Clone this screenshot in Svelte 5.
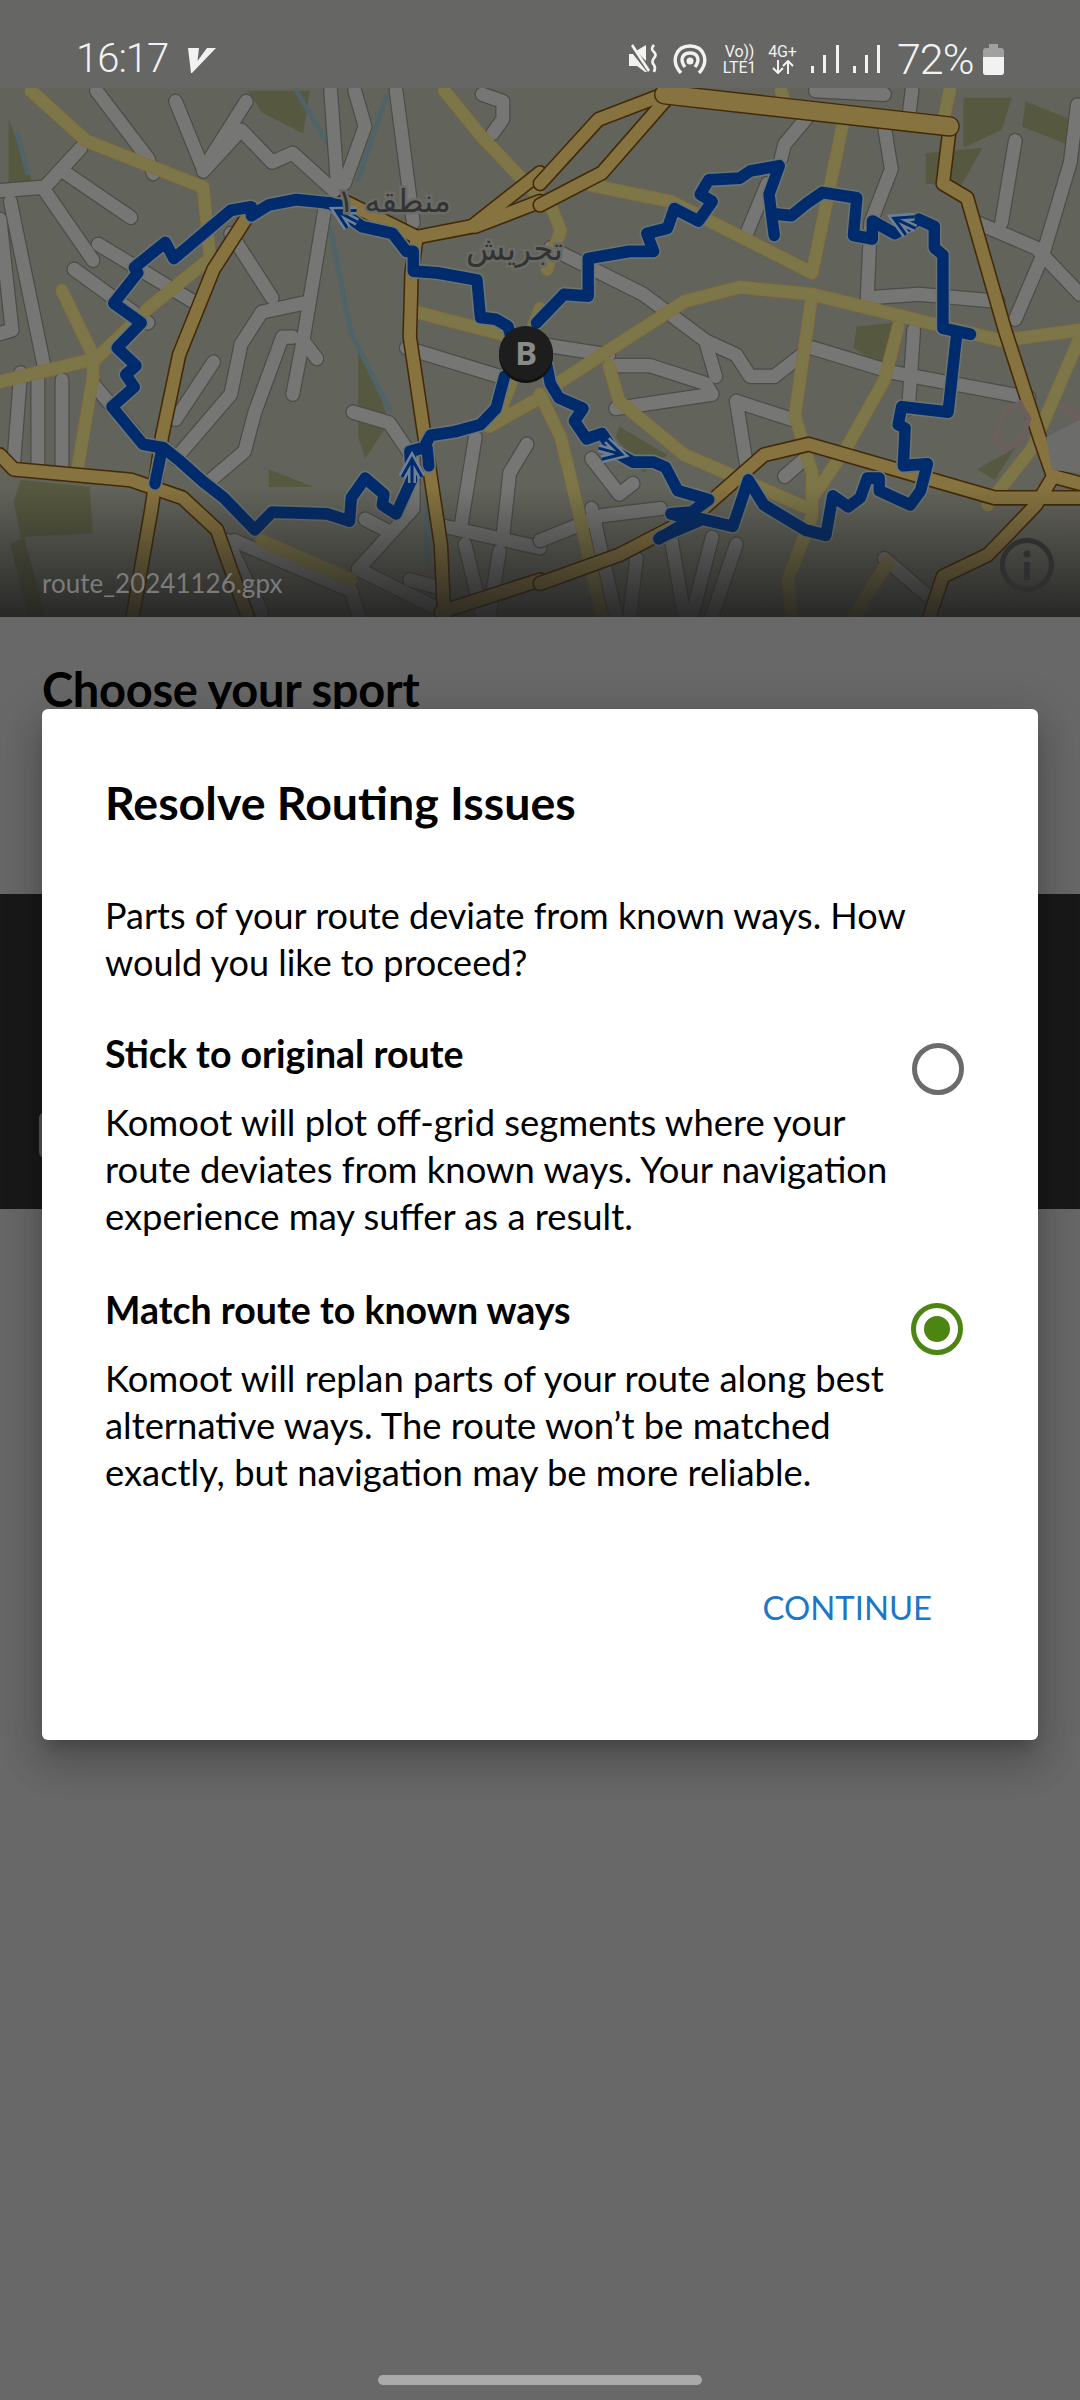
<script>
  // map traced in 1568px crop space, grouped per half of the screen
  const left = {
    minor: [
      "M510 60L590 250L715 60", "M590 255L700 140L790 230L850 205L970 310", "M280 30L335 100L430 220L445 262",
      "M0 310L130 300L235 190", "M190 260L380 385", "M130 310L270 505", "M285 460L560 620", "M215 530L430 680",
      "M30 340L130 810", "M0 390L35 700L0 710", "M670 430L790 610", "M960 30L980 300", "M1030 30L1060 130L1000 290",
      "M1150 30L1200 400", "M945 350L880 730L850 880", "M880 625L760 650L700 740L670 880L510 1060",
      "M850 720L820 720L740 930L710 1040L600 1130", "M620 790L510 950", "M880 730L920 780",
      "M60 820L40 1070", "M110 840L110 1075", "M180 840L180 1085", "M1025 930L1130 960L1200 1060L1200 1200L1040 1370",
      "M1180 750L1450 830", "M270 850L400 1000", "M1380 1000L1340 1240", "M1530 1020L1480 1100L1460 1280",
      "M1290 1250L1568 1310", "M680 1290L1020 1430L1040 1500", "M1040 1370L1270 1480", "M1060 1230L1120 1260",
      "M1190 1400L1270 1420", "M1400 40L1460 60L1460 110L1430 150", "M660 1290L760 1490", "M1350 1300L1400 1500", "M1450 1320L1420 1500"
    ],
    yellow: [
      "M90 30L250 170L590 300L610 500L430 640L280 780L0 845", "M180 590L270 770L270 830L225 1090",
      "M1290 30L1400 160L1568 330", "M1210 650L1470 715", "M1420 970L1568 890", "M760 1290L1020 1400", "M1568 640L1480 860L1440 960"
    ],
    major: [
      "M720 380L620 530L520 770L470 1000L440 1200L385 1505", "M0 1050L40 1090L380 1120L530 1170L630 1260L720 1505",
      "M1000 340L1210 440L1370 410L1568 260", "M1210 440L1195 540L1190 720L1230 980L1280 1300L1290 1505",
      "M1280 1490L1568 1400", "M1380 410L1568 340"
    ],
    wide: [],
    green: [
      "M720 30L900 30L880 150L760 90Z", "M1040 760L1110 900L1130 960L1060 1060L1040 1000Z", "M780 1090L910 1140L780 1140Z",
      "M60 1120L260 1140L270 1270L60 1280L40 1180Z", "M25 110L60 200L100 300L25 300Z", "M30 1300L80 1500L130 1500L70 1280Z"
    ],
    water: ["M860 30L960 190L970 300", "M960 420L1020 710L1130 920", "M1120 50L1040 280", "M1240 1170L1240 1350", "M50 150L80 260"],
    route: [
      "M1490 740L1475 690L1440 670L1395 665L1385 560L1270 540L1200 535L1200 480L1180 480L1140 430L1050 410L1000 375L960 345L860 335L780 350L730 380L730 355L670 365L505 500L480 455L390 525L400 540L330 625L410 680L340 750L395 800L365 825L390 860L325 915L415 1020L475 1030L520 1065L590 1125L650 1170L680 1200L740 1260L790 1210L950 1215L1015 1235L1020 1170L1060 1115L1115 1160L1110 1190L1150 1215L1195 1120L1190 1040L1230 1030L1250 995L1320 985L1395 965L1440 920L1465 830",
      "M470 1035L450 1130", "M1240 1030L1245 1080", "M950 345L985 350"
    ]
  };
  const right = {
    minor: [
      "M30 470L300 600L480 730L570 770L610 830L680 830L760 770", "M790 750L1030 820L1420 890", "M0 740L200 770",
      "M220 800L320 800L480 850L500 880L220 920", "M1085 700L1070 920", "M570 900L730 950", "M570 900L600 1080",
      "M700 220L710 180L780 100", "M600 430L660 290", "M1000 130L1020 250L960 400L950 610L1100 600L1330 620",
      "M1270 400L1440 470L1568 600", "M1380 670L1460 490L1540 230L1560 70", "M1340 400L1380 170", "M1000 1340L1120 1440",
      "M380 1280L420 1505", "M500 1280L440 1505", "M280 1340L260 1505", "M150 1200L220 1500", "M0 1290L180 1220L350 1200",
      "M570 1300L500 1500", "M150 1060L230 1160L270 1130", "M710 1110L770 1060", "M480 730L510 830", "M800 30L1000 40", "M1080 30L1070 110"
    ],
    yellow: [
      "M150 295L380 340L790 540L880 120", "M50 850L420 620L580 580L790 600L1340 730L1568 700",
      "M790 600L740 940L790 1100L790 1220L720 1400L730 1505", "M200 800L230 900L420 1050L780 1200",
      "M1040 690L1000 840L890 1030L790 1170", "M30 350L60 420L20 530", "M0 880L60 1000L110 1200L180 1505",
      "M1010 1350L910 1505", "M1190 30L1170 120", "M1300 1190L1430 1030L1568 720", "M700 30L710 60"
    ],
    major: [
      "M1190 130L1170 290L1240 330L1350 700L1450 1000L1490 1110L1440 1190L1300 1330L1170 1390L1130 1505",
      "M1490 1110L1568 1130", "M0 1410L230 1330L450 1220L650 1050L780 1020L1320 1170L1568 1170",
      "M0 290L170 110L360 40", "M0 350L180 260L370 50"
    ],
    wide: ["M360 40L1190 130"],
    green: [
      "M1230 50L1370 50L1340 140L1230 190Z", "M1410 60L1540 110L1530 180L1400 130Z", "M1120 205L1285 190L1220 300L1120 290Z",
      "M920 690L1030 680L990 800L910 750Z", "M230 970L370 1050L300 1100L220 1000Z", "M1270 1090L1380 1030L1320 1120Z"
    ],
    water: [],
    route: [
      "M-10 680L70 600L140 605L140 500L260 480L330 480L310 430L370 415L390 360L460 395L500 340L465 320L490 280L580 275L610 255L695 240L665 320L680 435",
      "M680 375L730 380L775 345L820 315L920 330L910 435L965 445L965 395L1030 430L1100 390L1145 410L1145 470L1170 490L1170 695L1250 712",
      "M1210 710L1185 930L1050 915L1040 965L1060 975L1055 1080L1125 1075L1105 1150L1075 1190L985 1150L985 1115L950 1115L930 1170L895 1195L850 1165L830 1275L770 1260L650 1190L605 1120L560 1250L450 1225L345 1285",
      "M350 1280L460 1235L380 1215L440 1210L490 1175L400 1150L365 1085L330 1070L270 1070L215 1040L180 990L135 1005L100 955L125 920L55 890L30 850L20 800"
    ]
  };
  const halves = [
    { data: left, move: "translate(0 80) scale(.3444 .3571)" },
    { data: right, move: "translate(540 80) scale(.3444 .3571)" }
  ];
  // x, y, heading of the little direction arrows on the route
  const arrows = [
    { x: 344, y: 215, a: -62 },
    { x: 412, y: 468, a: 0 },
    { x: 613, y: 452, a: 105 },
    { x: 902, y: 222, a: -65 }
  ];
</script>

<div class="screen">
  <header class="status">
    <div class="clock">
      <span>16:17</span>
      <svg width="28" height="27" viewBox="0 0 28 27">
        <path d="M0 1H11L9.500 14L19 1H28L4 26H3Z" fill="#f2f2f2" />
      </svg>
    </div>
    <div class="tray">
      <svg width="30" height="30" viewBox="0 0 30 30" fill="#f2f2f2">
        <path d="M0 10H4L18 28H16L8 22H0Z" />
        <path d="M7 7L17 1V17Z" />
        <path d="M2 2L4 0L21 26L19 28Z" />
        <path d="M25 1q-4 4 0 7q3 3 0 6q-3 4 0 7q2 3 0 7" fill="none" stroke="#f2f2f2" stroke-width="2.6" />
      </svg>
      <svg class="gap-hot" width="34" height="30" viewBox="0 0 34 30" fill="none" stroke="#f2f2f2" stroke-width="3.4">
        <path d="M8 29C-3 17 3 2 17 2S37 17 26 29" />
        <path d="M12 23C6 15 10 9 17 9S28 15 22 23" />
        <circle cx="17" cy="17" r="3.500" fill="#f2f2f2" stroke="none" />
      </svg>
      <div class="stack volte"><span>Vo))</span><span>LTE1</span></div>
      <div class="stack net">
        <span>4G+</span>
        <svg width="24" height="14" viewBox="0 0 24 14" fill="none" stroke="#f2f2f2" stroke-width="2">
          <path d="M7 0V13M2 8L7 13L12 8M17 14V1M12 6L17 1L22 6" />
        </svg>
      </div>
      <svg class="gap-sig" width="70" height="30" viewBox="0 0 70 30" fill="#f2f2f2">
        <rect x="1" y="22" width="3" height="7" /><rect x="13" y="11" width="3" height="18" /><rect x="26" y="1" width="3" height="28" />
        <rect x="43" y="22" width="3" height="7" /><rect x="55" y="11" width="3" height="18" /><rect x="67" y="1" width="3" height="28" />
      </svg>
      <span class="pct">72%</span>
      <div class="batt"><i></i></div>
    </div>
  </header>

  <section class="map">
    <svg class="tiles" viewBox="0 88 1080 529" width="1080" height="529">
      {#each halves as half}
        <g transform={half.move} fill="none" stroke-linejoin="round" stroke-linecap="round">
          {#each half.data.green as d}<path {d} fill="#56583f" />{/each}
          {#each half.data.water as d}<path {d} stroke="#4f6468" stroke-width="14" />{/each}
          {#each half.data.minor as d}<path {d} stroke="#4c4c48" stroke-width="44" />{/each}
          {#each half.data.minor as d}<path {d} stroke="#767675" stroke-width="37" />{/each}
          {#each half.data.yellow as d}<path {d} stroke="#85703a" stroke-width="37" />{/each}
          {#each half.data.yellow as d}<path {d} stroke="#7d7648" stroke-width="31" />{/each}
          {#each half.data.major as d}<path {d} stroke="#422a08" stroke-width="44" />{/each}
          {#each half.data.major as d}<path {d} stroke="#87733f" stroke-width="35" />{/each}
          {#each half.data.wide as d}<path {d} stroke="#422a08" stroke-width="58" />{/each}
          {#each half.data.wide as d}<path {d} stroke="#87733f" stroke-width="50" />{/each}
        </g>
      {/each}
      <path class="patch" d="M1046 437L1080 420V473L1052 470Z" />
      <path class="pink" d="M1005 410L1020 403L1029 419L1022 437L1005 451L995 439ZM1060 405L1080 419" />
      <path class="pink faint" d="M980 610L1080 510M1000 617L1080 540M1040 617L1080 575M950 617L1040 520" />
      {#each halves as half}
        <g transform={half.move} fill="none" stroke-linejoin="round" stroke-linecap="round">
          {#each half.data.route as d}<path {d} stroke="#6b7472" stroke-width="42" />{/each}
          {#each half.data.route as d}<path {d} stroke="#002b6c" stroke-width="33" />{/each}
        </g>
      {/each}
      {#each arrows as a}
        <g class="arrow" transform="translate({a.x} {a.y}) rotate({a.a})">
          <path d="M-10 9L0-9L10 9M0-9V15" stroke="#6f8096" stroke-width="8" />
          <path d="M-10 9L0-9L10 9M0-9V15" stroke="#002b6c" stroke-width="3" />
        </g>
      {/each}
      <text class="label" x="451" y="212" text-anchor="end">منطقه ۱</text>
      <text class="label" x="563" y="260" text-anchor="end">تجریش</text>
    </svg>
    <div class="fade"></div>
    <div class="pin">B</div>
    <span class="file">route_20241126.gpx</span>
    <svg class="info" width="56" height="56" viewBox="0 0 56 56">
      <circle cx="28" cy="28" r="24.500" fill="none" stroke="#2f2f2f" stroke-width="5" />
      <rect x="25" y="25" width="6" height="18" fill="#2f2f2f" />
      <circle cx="28" cy="17" r="3.500" fill="#2f2f2f" />
    </svg>
  </section>

  <section class="sport">
    <h2>Choose your sport</h2>
  </section>

  <section class="band">
    <div class="chip"></div>
  </section>
</div>

<div class="dialog">
  <h1>Resolve Routing Issues</h1>
  <p class="lead">Parts of your route deviate from known ways. How would you like to proceed?</p>

  <div class="option first">
    <div class="copy">
      <h3>Stick to original route</h3>
      <p>Komoot will plot off-grid segments where your route deviates from known ways. Your navigation experience may suffer as a result.</p>
    </div>
    <span class="radio"></span>
  </div>

  <div class="option second">
    <div class="copy">
      <h3>Match route to known ways</h3>
      <p>Komoot will replan parts of your route along best alternative ways. The route won’t be matched exactly, but navigation may be more reliable.</p>
    </div>
    <span class="radio on"></span>
  </div>

  <div class="actions"><span>CONTINUE</span></div>
</div>

<div class="pill"></div>

<style>
  :global(body) {
    margin: 0;
    background: #686868;
  }

  .screen {
    width: 1080px;
    height: 2400px;
    display: flex;
    flex-direction: column;
    overflow: hidden;
    font-family: Lato, "Noto Sans", sans-serif;
    color: #000;
  }

  .status {
    height: 88px;
    flex: none;
    background: #666664;
    color: #f2f2f2;
    font-family: Roboto, sans-serif;
    display: flex;
    justify-content: space-between;
    padding: 44px 76px 0 76px;
    box-sizing: border-box;
  }

  .clock {
    display: flex;
    align-items: flex-start;
    gap: 20px;
    font-size: 40px;
    font-weight: 300;
    line-height: 30px;
    letter-spacing: -1px;
  }

  .clock svg {
    margin-top: 3px;
  }

  .tray {
    display: flex;
    align-items: flex-start;
    height: 32px;
  }

  .gap-hot {
    margin-left: 14px;
  }

  .stack {
    display: flex;
    flex-direction: column;
    align-items: center;
    font-size: 16px;
    line-height: 16px;
    width: 39px;
    margin-left: 13px;
    letter-spacing: -.2px;
    white-space: nowrap;
  }

  .net {
    width: 31px;
    margin-left: 8px;
  }

  .gap-sig {
    margin-left: 12px;
  }

  .pct {
    width: 78px;
    font-size: 43px;
    font-weight: 300;
    line-height: 30px;
    margin-left: 17px;
    letter-spacing: -1px;
    white-space: nowrap;
  }

  .batt {
    margin-left: 8px;
    width: 21px;
    height: 27px;
    margin-top: 4px;
    border-radius: 3px;
    background: #a0a0a0;
    position: relative;
  }

  .batt::before {
    content: "";
    position: absolute;
    left: 6px;
    top: -4px;
    width: 9px;
    height: 4px;
    background: #a0a0a0;
  }

  .batt i {
    position: absolute;
    left: 0;
    right: 0;
    bottom: 0;
    height: 18px;
    background: #f2f2f2;
    border-radius: 0 0 3px 3px;
  }

  .map {
    height: 529px;
    flex: none;
    position: relative;
    background: #62635a;
    overflow: hidden;
  }

  .tiles {
    display: block;
  }

  .label {
    font-family: "DejaVu Sans", sans-serif;
    font-size: 32px;
    fill: #333;
    stroke: #6a6a66;
    stroke-width: 5px;
    paint-order: stroke;
  }

  .patch {
    fill: #6c6c6a;
  }

  .pink {
    fill: none;
    stroke: #6e5f5f;
    stroke-width: 5;
  }

  .faint {
    stroke-width: 2;
    opacity: .5;
  }

  .arrow path {
    fill: none;
  }

  .fade {
    position: absolute;
    left: 0;
    right: 0;
    bottom: 0;
    height: 130px;
    background: linear-gradient(rgba(30, 30, 30, 0), rgba(30, 30, 30, .85));
  }

  .pin {
    position: absolute;
    left: 499px;
    top: 238px;
    width: 54px;
    height: 54px;
    border-radius: 50%;
    background: #1d1d1d;
    box-shadow: 0 3px 0 #111;
    color: #8a8a8a;
    font: 700 33px/54px "Open Sans", sans-serif;
    text-align: center;
  }

  .file {
    position: absolute;
    left: 42px;
    top: 477px;
    font-size: 26px;
    line-height: 36px;
    color: #7b7b7b;
  }

  .info {
    position: absolute;
    left: 999px;
    top: 449px;
  }

  .sport {
    height: 277px;
    flex: none;
    padding: 0 42px;
    box-sizing: border-box;
  }

  h2 {
    margin: 47px 0 0;
    font-size: 47px;
    line-height: 50px;
    font-weight: 700;
    letter-spacing: -.3px;
  }

  .band {
    height: 315px;
    flex: none;
    background: #191919;
    position: relative;
  }

  .chip {
    position: absolute;
    left: 39px;
    top: 218px;
    width: 12px;
    height: 46px;
    background: #555;
    border-radius: 6px 0 0 6px;
  }

  .dialog {
    position: absolute;
    left: 42px;
    top: 709px;
    width: 996px;
    height: 1031px;
    box-sizing: border-box;
    padding: 65px 63px 0;
    background: #fff;
    border-radius: 6px;
    box-shadow: 0 24px 38px 3px rgba(0, 0, 0, .14), 0 9px 46px 8px rgba(0, 0, 0, .12), 0 11px 15px -7px rgba(0, 0, 0, .2);
    font-family: Lato, "Noto Sans", sans-serif;
    color: #000;
  }

  h1 {
    margin: 0;
    font-size: 46.500px;
    line-height: 56px;
    font-weight: 700;
  }

  p {
    margin: 0;
    font-size: 36.400px;
    line-height: 47px;
    font-weight: 400;
  }

  .lead {
    margin-top: 62px;
    width: 840px;
    font-size: 36px;
  }

  .option {
    display: flex;
    justify-content: space-between;
    align-items: flex-start;
  }

  .first {
    margin-top: 44px;
  }

  .second {
    margin-top: 46px;
  }

  .copy {
    width: 790px;
  }

  h3 {
    margin: 0 0 22px;
    font-size: 37.500px;
    line-height: 47px;
    font-weight: 700;
  }

  .radio {
    width: 52px;
    height: 52px;
    box-sizing: border-box;
    border: 5px solid #6b6b6b;
    border-radius: 50%;
    margin: 13px 11px 0 0;
    display: flex;
    align-items: center;
    justify-content: center;
    flex: none;
  }

  .radio.on {
    border-color: #4c8512;
    margin: 17px 12px 0 0;
  }

  .radio.on::after {
    content: "";
    width: 26px;
    height: 26px;
    border-radius: 50%;
    background: #4c8512;
  }

  .actions {
    display: flex;
    justify-content: flex-end;
    margin: 88px 43px 0 0;
    font-size: 32.800px;
    line-height: 47px;
    color: #1a78c8;
  }

  .pill {
    position: absolute;
    left: 378px;
    top: 2375px;
    width: 324px;
    height: 10px;
    border-radius: 5px;
    background: #aaa;
  }
</style>
